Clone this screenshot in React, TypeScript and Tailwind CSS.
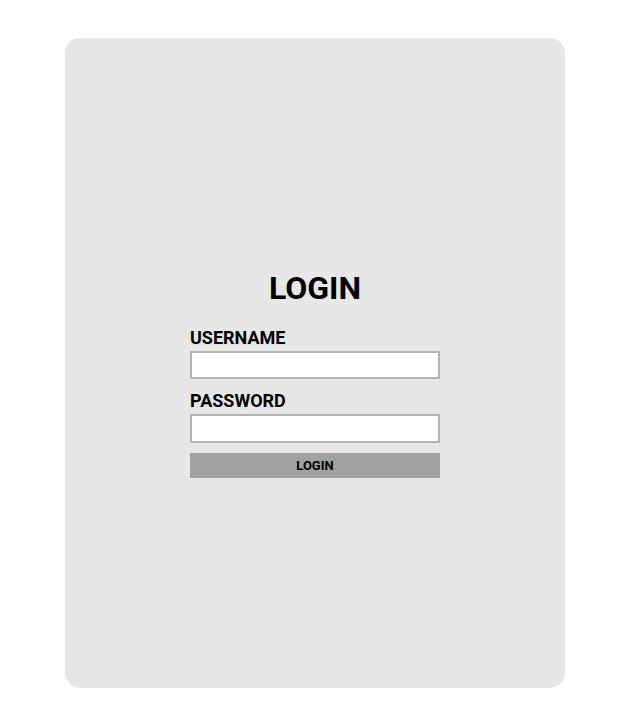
export default function App() {
  return (
    <div className="min-h-[710px] w-full bg-white pt-[38px] pl-[65px] font-['Roboto',sans-serif]">
      <div className="flex h-[650px] w-[500px] flex-col items-center rounded-[15px] bg-[#e7e7e7] pt-[231px]">
        <h1 className="h-[38px] text-[32px] font-bold leading-[38px] text-black">LOGIN</h1>
        <form className="mt-[20px] flex w-[250px] flex-col" onSubmit={(e) => e.preventDefault()}>
          <label className="h-[21px] text-[18px] font-bold leading-[21px] text-black">USERNAME</label>
          <input className="mt-[3px] h-[28px] w-full border-2 border-[#b3b3b3] bg-white px-1 outline-none" type="text" />
          <label className="mt-[11px] h-[21px] text-[18px] font-bold leading-[21px] text-black">PASSWORD</label>
          <input className="mt-[3px] h-[29px] w-full border-2 border-[#b3b3b3] bg-white px-1 outline-none" type="password" />
          <button
            type="submit"
            className="mt-[10px] h-[25px] w-full bg-[#a1a1a1] text-[13px] font-bold leading-[25px] text-black"
          >
            LOGIN
          </button>
        </form>
      </div>
    </div>
  );
}
